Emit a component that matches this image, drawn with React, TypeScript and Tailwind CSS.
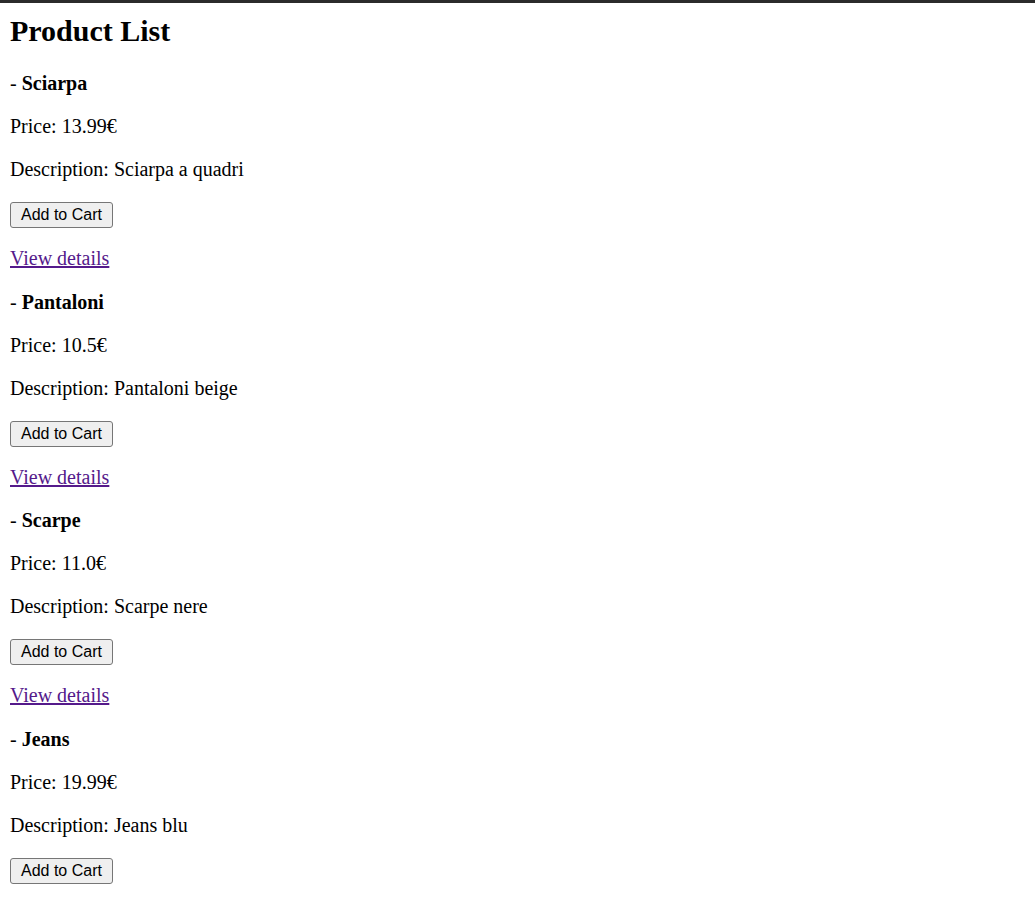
import React from "react";

type Product = {
  name: string;
  price: string;
  description: string;
};

const products: Product[] = [
  { name: "Sciarpa", price: "13.99", description: "Sciarpa a quadri" },
  { name: "Pantaloni", price: "10.5", description: "Pantaloni beige" },
  { name: "Scarpe", price: "11.0", description: "Scarpe nere" },
  { name: "Jeans", price: "19.99", description: "Jeans blu" },
];

export default function App() {
  return (
    <main className="min-h-screen bg-white border-t-[3px] border-[#2b2b2b] px-[10px] pt-[11px] pb-10 text-black font-['Liberation_Serif','Times_New_Roman',serif]">
      {/* HEADER */}
      <h1 className="text-[30px] leading-[34px] font-bold">Product List</h1>

      {/* LIST */}
      <div className="pt-[4px]">
        {products.map((product) => (
          <div key={product.name} className="text-[20px] leading-[23.13px]">
            <p className="mt-[20px]">
              - <b>{product.name}</b>
            </p>
            <p className="mt-[20px]">Price: {product.price}€</p>
            <p className="mt-[20px]">Description: {product.description}</p>
            <div className="mt-[20px] h-[28px] flex items-center">
              <button className="h-[26px] px-[10px] bg-[#efefef] border border-[#767676] rounded-[3px] text-[16px] leading-[18px] text-black font-['Liberation_Sans',Arial,sans-serif]">
                Add to Cart
              </button>
            </div>
            <p className="mt-[18px]">
              <a href="#" className="text-[#551a8b] underline">
                View details
              </a>
            </p>
          </div>
        ))}
      </div>
    </main>
  );
}
